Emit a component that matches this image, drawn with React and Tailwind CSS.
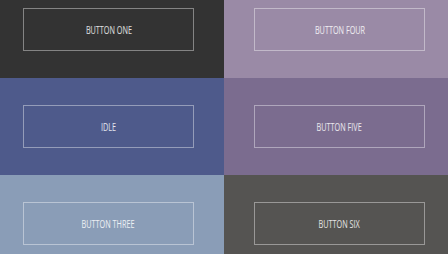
import React from 'react';

const rows = [
  [
    { label: 'BUTTON ONE', bg: 'bg-[#333333]', pad: 'pl-[23px]' },
    { label: 'BUTTON FOUR', bg: 'bg-[#9a8aa6]', pad: 'pl-[30px]' },
  ],
  [
    { label: 'IDLE', bg: 'bg-[#4e5a8b]', pad: 'pl-[23px]' },
    { label: 'BUTTON FIVE', bg: 'bg-[#7b6c8f]', pad: 'pl-[30px]' },
  ],
  [
    { label: 'BUTTON THREE', bg: 'bg-[#8a9db7]', pad: 'pl-[23px]' },
    { label: 'BUTTON SIX', bg: 'bg-[#555452]', pad: 'pl-[30px]' },
  ],
];

export default function App() {
  return (
    <div className="w-[448px] h-[254px] overflow-hidden" style={{ fontFamily: '"Open Sans", sans-serif' }}>
      <div className="mt-[-19px]">
        {rows.map((row, i) => (
          <div key={i} className="grid grid-cols-2">
            {row.map((cell) => (
              <div key={cell.label} className={`h-[97px] flex items-center ${cell.bg} ${cell.pad}`}>
                <button className="w-[171px] h-[43px] border border-white/40 text-white/85 text-[11px] font-normal flex items-center justify-center pt-px">
                  <span className="inline-block scale-x-[0.66] whitespace-nowrap">{cell.label}</span>
                </button>
              </div>
            ))}
          </div>
        ))}
      </div>
    </div>
  );
}
